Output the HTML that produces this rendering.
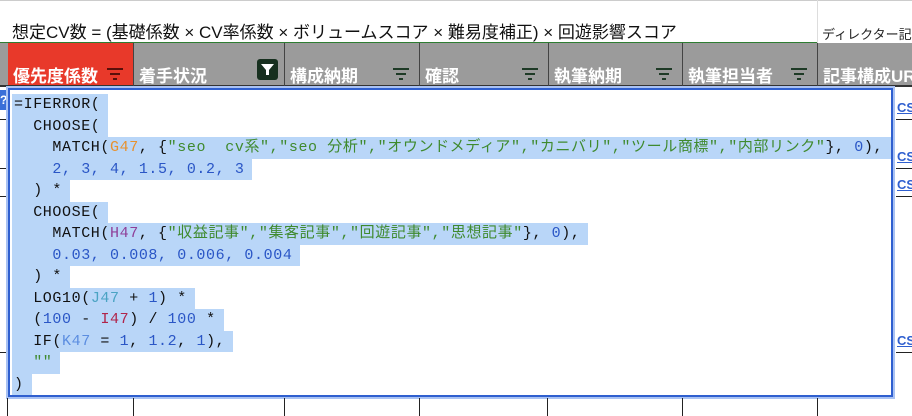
<!DOCTYPE html>
<html><head><meta charset="utf-8"><style>
*{margin:0;padding:0;box-sizing:border-box}
body{width:912px;height:416px;overflow:hidden;background:#fff;position:relative;font-family:"Liberation Sans","Noto Sans CJK JP",sans-serif}
.abs{position:absolute}
.title{left:12px;top:18px;font-size:17px;color:#111;white-space:nowrap}
.dir{left:822px;top:24px;font-size:13px;color:#222;white-space:nowrap}
.hdr{top:43px;height:44px;background:#9b9b9b;border-right:1px solid #444;border-bottom:2px solid #333;color:#fff;font-weight:bold;font-size:17px;padding:19px 0 0 5px;white-space:nowrap;overflow:hidden}
.flt{position:absolute;right:10px;top:25px;width:16px;height:12px}
.flt i{position:absolute;left:50%;height:2px;background:#1e3a26;transform:translateX(-50%)}
.ed{left:8px;top:88px;width:885px;height:309px;border:2px solid #2f5fcf;box-shadow:0 0 0 2px #a9c2f3;background:#fff}
.code{position:absolute;left:2px;top:4px;font-family:"Liberation Mono","Noto Sans CJK JP",monospace;font-size:15px;letter-spacing:0.6px;color:#111}
.ln{height:21.5px;line-height:21.5px;white-space:pre}
.ln span.h{display:inline-block;background:#b9d6f8;padding:0 8px 0 2px;height:21.5px}
.n{color:#2a56c6}.s{color:#3f8a2e}
.vl{width:1px;background:#222;top:398px;height:18px}
.cs{left:897px;font-size:13px;font-weight:bold;color:#2f5fcf;text-decoration:underline}
.ul{left:896px;width:16px;height:1px;background:#222}
</style></head><body>
<div class="abs" style="left:0;top:0;width:912px;height:1px;background:#ccc"></div>
<div class="abs title">想定CV数 = (基礎係数 × CV率係数 × ボリュームスコア × 難易度補正) × 回遊影響スコア</div>
<div class="abs" style="left:817px;top:0;width:1px;height:43px;background:#ddd"></div>
<div class="abs dir">ディレクター記入</div>
<div class="abs" style="left:0;top:42px;width:817px;height:1px;background:#2e7d32"></div>
<div class="abs" style="left:0;top:43px;width:8px;height:44px;background:#9b9b9b;border-bottom:2px solid #333"></div>

<div class="abs hdr" style="left:8px;width:126px;background:#e8392a">優先度係数<div class="flt"><i style="top:0;width:16px;background:#5a0f0a"></i><i style="top:5px;width:10px;background:#5a0f0a"></i><i style="top:10px;width:4px;background:#5a0f0a"></i></div></div>
<div class="abs hdr" style="left:134px;width:151px">着手状況<div style="position:absolute;right:6px;top:16px;width:21px;height:21px;background:#17301f;border-radius:3px"><svg width="21" height="21" viewBox="0 0 21 21"><path d="M4 5h13l-5 6v5h-3v-5z" fill="#fff"/></svg></div></div>
<div class="abs hdr" style="left:285px;width:135px">構成納期<div class="flt"><i style="top:0;width:16px"></i><i style="top:5px;width:10px"></i><i style="top:10px;width:4px"></i></div></div>
<div class="abs hdr" style="left:420px;width:129px">確認<div class="flt"><i style="top:0;width:16px"></i><i style="top:5px;width:10px"></i><i style="top:10px;width:4px"></i></div></div>
<div class="abs hdr" style="left:549px;width:134px">執筆納期<div class="flt"><i style="top:0;width:16px"></i><i style="top:5px;width:10px"></i><i style="top:10px;width:4px"></i></div></div>
<div class="abs hdr" style="left:683px;width:135px">執筆担当者<div class="flt"><i style="top:0;width:16px"></i><i style="top:5px;width:10px"></i><i style="top:10px;width:4px"></i></div></div>
<div class="abs hdr" style="left:818px;width:94px;border-right:none">記事構成URL</div>

<div class="abs" style="left:0;top:90px;width:7px;height:20px;background:#3a6fd8;color:#fff;font-size:12px;font-weight:bold;line-height:20px">?</div>
<div class="abs" style="left:0;top:119px;width:8px;height:1px;background:#222"></div>
<div class="abs" style="left:0;top:168px;width:8px;height:1px;background:#222"></div>
<div class="abs" style="left:0;top:196px;width:8px;height:1px;background:#222"></div>
<div class="abs" style="left:0;top:352px;width:8px;height:1px;background:#222"></div>

<div class="abs cs" style="top:100px">CS</div><div class="abs ul" style="top:119px"></div>
<div class="abs cs" style="top:149px">CS</div><div class="abs ul" style="top:168px"></div>
<div class="abs cs" style="top:177px">CS</div><div class="abs ul" style="top:196px"></div>
<div class="abs cs" style="top:333px">CS</div><div class="abs ul" style="top:352px"></div>

<div class="abs ed"><div class="code">
<div class="ln"><span class="h">=IFERROR(</span></div>
<div class="ln"><span class="h">  CHOOSE(</span></div>
<div class="ln"><span class="h">    MATCH(<span style="color:#e8912d">G47</span>, {<span class="s">"seo  cv系","seo 分析","オウンドメディア","カニバリ","ツール商標","内部リンク"</span>}, <span class="n">0</span>),</span></div>
<div class="ln"><span class="h">    <span class="n">2, 3, 4, 1.5, 0.2, 3</span></span></div>
<div class="ln"><span class="h">  ) *</span></div>
<div class="ln"><span class="h">  CHOOSE(</span></div>
<div class="ln"><span class="h">    MATCH(<span style="color:#8e3f98">H47</span>, {<span class="s">"収益記事","集客記事","回遊記事","思想記事"</span>}, <span class="n">0</span>),</span></div>
<div class="ln"><span class="h">    <span class="n">0.03, 0.008, 0.006, 0.004</span></span></div>
<div class="ln"><span class="h">  ) *</span></div>
<div class="ln"><span class="h">  LOG10(<span style="color:#4aa3c3">J47</span> + <span class="n">1</span>) *</span></div>
<div class="ln"><span class="h">  (<span class="n">100</span> - <span style="color:#b0244a">I47</span>) / <span class="n">100</span> *</span></div>
<div class="ln"><span class="h">  IF(<span style="color:#5b8de0">K47</span> = <span class="n">1</span>, <span class="n">1.2</span>, <span class="n">1</span>),</span></div>
<div class="ln"><span class="h">  <span class="s">""</span></span></div>
<div class="ln"><span class="h">)</span></div>
</div></div>

<div class="abs vl" style="left:7px"></div>
<div class="abs vl" style="left:133px"></div>
<div class="abs vl" style="left:284px"></div>
<div class="abs vl" style="left:419px"></div>
<div class="abs vl" style="left:547px"></div>
<div class="abs vl" style="left:682px"></div>
<div class="abs vl" style="left:817px"></div>
</body></html>
